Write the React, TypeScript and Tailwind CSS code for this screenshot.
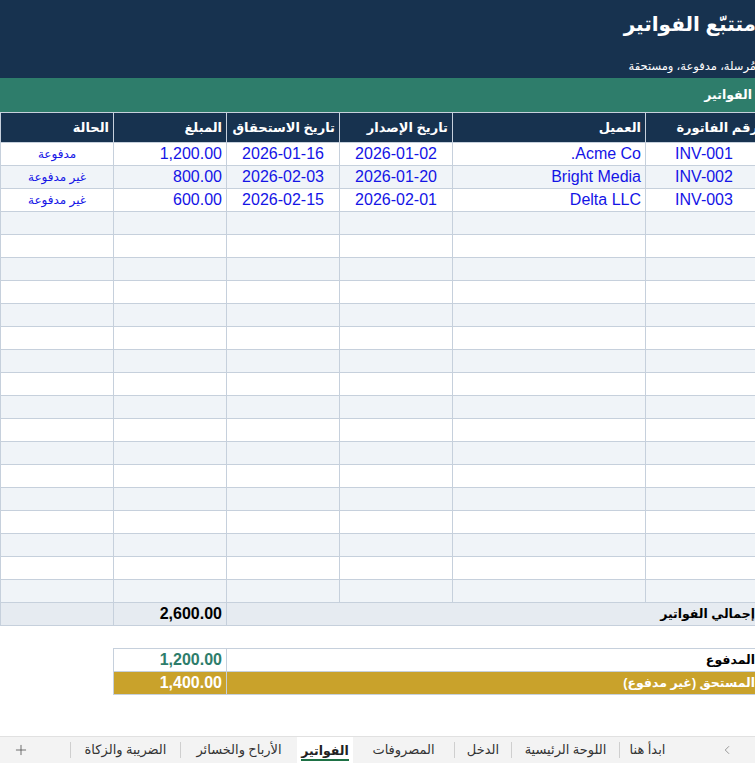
import React from 'react';
import { ChevronLeft, Plus } from 'lucide-react';

type Invoice = {
  id: string;
  client: string;
  issued: string;
  due: string;
  amount: string;
  status: string;
};

const invoices: Invoice[] = [
  { id: 'INV-001', client: 'Acme Co.', issued: '2026-01-02', due: '2026-01-16', amount: '1,200.00', status: 'مدفوعة' },
  { id: 'INV-002', client: 'Bright Media', issued: '2026-01-20', due: '2026-02-03', amount: '800.00', status: 'غير مدفوعة' },
  { id: 'INV-003', client: 'Delta LLC', issued: '2026-02-01', due: '2026-02-15', amount: '600.00', status: 'غير مدفوعة' },
];

const headers = ['رقم الفاتورة', 'العميل', 'تاريخ الإصدار', 'تاريخ الاستحقاق', 'المبلغ', 'الحالة'];

// sheet tabs, right to left, with their widths in the tab strip
const tabs = [
  { name: 'ابدأ هنا', w: 'w-[55px]' },
  { name: 'اللوحة الرئيسية', w: 'w-[107px]' },
  { name: 'الدخل', w: 'w-[56px]' },
  { name: 'المصروفات', w: 'w-[101px]' },
  { name: 'الفواتير', w: 'w-[56px]', active: true },
  { name: 'الأرباح والخسائر', w: 'w-[116px]' },
  { name: 'الضريبة والزكاة', w: 'w-[109px]' },
];

const EMPTY_ROWS = 17;

export default function App() {
  const rowBg = (i: number) => (i % 2 === 0 ? 'bg-white' : 'bg-[#f0f4f8]');

  return (
    <div
      dir="rtl"
      className="flex h-[763px] w-[755px] flex-col overflow-hidden bg-white font-['Liberation_Sans','DejaVu_Sans',sans-serif]"
    >
      {/* sheet, scrolled a few px so column A is cut at the right edge */}
      <div className="-mr-[7px] w-[762px] shrink-0">
        {/* Title band */}
        <div className="h-[78px] bg-[#17324f] pr-[6px] pt-[9px] text-white">
          <h1 className="text-[20px] font-bold leading-[30px]">متتبّع الفواتير</h1>
          <p className="mt-[19px] text-[11.5px] leading-[16px]">مُرسلة، مدفوعة، ومستحقة</p>
        </div>
        <div className="flex h-[34px] items-center bg-[#2e7d6b] pr-[10px] text-[12.5px] font-bold text-white">
          الفواتير
        </div>

        {/* Table */}
        <div className="grid grid-cols-[116px_192px_112px_112px_112px_112px] gap-px bg-[#c6d0dc] p-px pr-0">
          {headers.map((h) => (
            <div key={h} className="flex h-[29px] items-center bg-[#17324f] px-1 text-[13px] font-bold text-white">
              {h}
            </div>
          ))}

          {invoices.map((inv, i) => (
            <React.Fragment key={inv.id}>
              <div className={`${rowBg(i)} flex h-[22px] items-center justify-center text-[16px] text-[#1414e6]`}>
                {inv.id}
              </div>
              <div className={`${rowBg(i)} flex h-[22px] items-center px-1 text-[16px] text-[#1414e6]`}>
                {inv.client}
              </div>
              <div className={`${rowBg(i)} flex h-[22px] items-center justify-center text-[16px] text-[#1414e6]`}>
                {inv.issued}
              </div>
              <div className={`${rowBg(i)} flex h-[22px] items-center justify-center text-[16px] text-[#1414e6]`}>
                {inv.due}
              </div>
              <div className={`${rowBg(i)} flex h-[22px] items-center justify-end px-1 text-[16px] text-[#1414e6]`} dir="ltr">
                {inv.amount}
              </div>
              <div className={`${rowBg(i)} flex h-[22px] items-center justify-center text-[12px] text-[#1414e6]`}>
                {inv.status}
              </div>
            </React.Fragment>
          ))}

          {Array.from({ length: EMPTY_ROWS }).map((_, r) =>
            Array.from({ length: 6 }).map((__, c) => (
              <div key={`${r}-${c}`} className={`${rowBg(r + invoices.length)} h-[22px]`} />
            ))
          )}

          {/* Total row */}
          <div className="col-span-4 flex h-[22px] items-center bg-[#e6ebf1] pr-[7px] text-[12.5px] font-bold text-black">
            إجمالي الفواتير
          </div>
          <div className="flex h-[22px] items-center justify-end bg-[#e6ebf1] px-1 text-[16px] font-bold text-black" dir="ltr">
            2,600.00
          </div>
          <div className="h-[22px] bg-[#e6ebf1]" />
        </div>

        <div className="h-[22px]" />

        {/* Summary */}
        <div className="ml-[113px] grid grid-cols-[535px_112px] gap-px bg-[#c6d0dc] p-px pr-0">
          <div className="flex h-[22px] items-center bg-white pr-[7px] text-[12.5px] font-bold text-black">المدفوع</div>
          <div className="flex h-[22px] items-center justify-end bg-white px-1 text-[16px] font-bold text-[#2e7d6b]" dir="ltr">
            1,200.00
          </div>
          <div className="flex h-[22px] items-center bg-[#c9a22b] pr-[7px] text-[12.5px] font-bold text-white">
            المستحق (غير مدفوع)
          </div>
          <div className="flex h-[22px] items-center justify-end bg-[#c9a22b] px-1 text-[16px] font-bold text-white" dir="ltr">
            1,400.00
          </div>
        </div>
      </div>

      {/* Sheet tabs */}
      <div className="mt-auto flex h-[27px] shrink-0 items-stretch border-t border-[#e1e1e1] bg-[#f3f3f3] font-['Noto_Sans','DejaVu_Sans',sans-serif] text-[13px] text-[#333]">
        <div className="flex w-[80px] items-center justify-start pr-[21px] text-[#8a8a8a]">
          <ChevronLeft size={14} strokeWidth={1.5} />
        </div>
        {tabs.map((t, i) => (
          <React.Fragment key={t.name}>
            {i > 0 && !t.active && !tabs[i - 1].active && <div className="my-auto h-[16px] w-px bg-[#cfcfcf]" />}
            <div
              className={`${t.w} flex shrink-0 items-center justify-center ${
                t.active ? 'bg-white text-[12.5px] font-bold text-[#222]' : ''
              }`}
            >
              <span className={t.active ? 'mt-[2px] border-b-[2px] border-[#1e7145] leading-[17px]' : ''}>{t.name}</span>
            </div>
          </React.Fragment>
        ))}
        <div className="my-auto h-[16px] w-px bg-[#cfcfcf]" />
        <div className="mr-auto flex w-[42px] items-center justify-center text-[#555]">
          <Plus size={16} strokeWidth={1.25} />
        </div>
      </div>
    </div>
  );
}
